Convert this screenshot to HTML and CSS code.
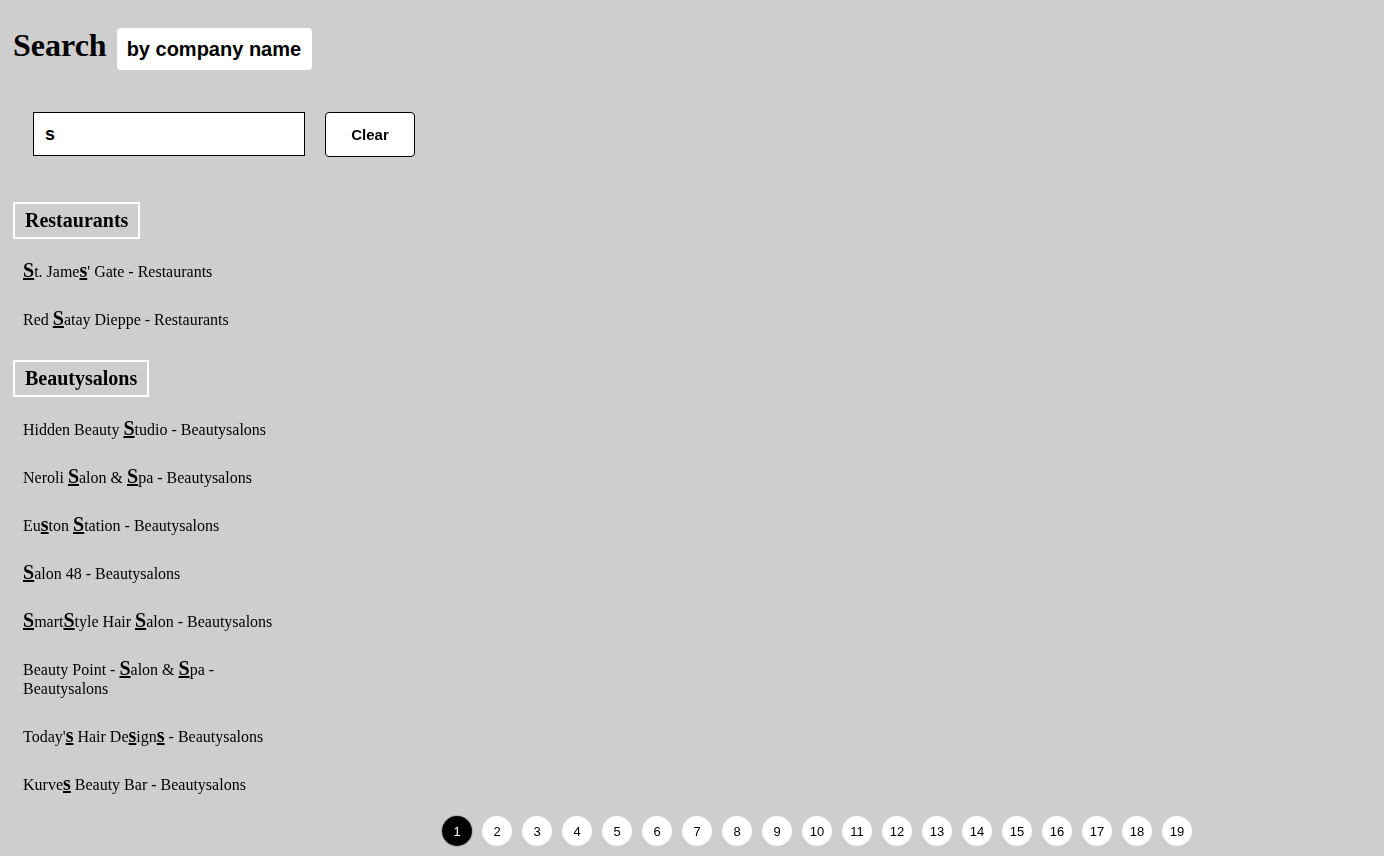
FILE: index.html
```html
<!DOCTYPE html>
<html lang="en">
<head>
<meta charset="utf-8">
<title>Search</title>
<link rel="stylesheet" href="styles.css">
</head>
<body>
<header class="top">
  <h1 class="title">Search</h1>
  <div class="mode">by company name</div>
</header>
<div class="search-row">
  <input class="search-input" type="text" value="s" autofocus>
  <button class="clear-btn" type="button">Clear</button>
</div>
<section class="results">
  <h3 class="group-title">Restaurants</h3>
  <ul class="items">
    <li class="item"><mark class="hl">S</mark>t. Jame<mark class="hl">s</mark>' Gate - Restaurants</li>
    <li class="item">Red <mark class="hl">S</mark>atay Dieppe - Restaurants</li>
  </ul>
  <h3 class="group-title">Beautysalons</h3>
  <ul class="items">
    <li class="item">Hidden Beauty <mark class="hl">S</mark>tudio - Beautysalons</li>
    <li class="item">Neroli <mark class="hl">S</mark>alon &amp; <mark class="hl">S</mark>pa - Beautysalons</li>
    <li class="item">Eu<mark class="hl">s</mark>ton <mark class="hl">S</mark>tation - Beautysalons</li>
    <li class="item"><mark class="hl">S</mark>alon 48 - Beautysalons</li>
    <li class="item"><mark class="hl">S</mark>mart<mark class="hl">S</mark>tyle Hair <mark class="hl">S</mark>alon - Beautysalons</li>
    <li class="item">Beauty Point - <mark class="hl">S</mark>alon &amp; <mark class="hl">S</mark>pa - Beautysalons</li>
    <li class="item">Today'<mark class="hl">s</mark> Hair De<mark class="hl">s</mark>ign<mark class="hl">s</mark> - Beautysalons</li>
    <li class="item">Kurve<mark class="hl">s</mark> Beauty Bar - Beautysalons</li>
  </ul>
</section>
<nav class="pager">
  <span class="page active">1</span>
  <span class="page">2</span>
  <span class="page">3</span>
  <span class="page">4</span>
  <span class="page">5</span>
  <span class="page">6</span>
  <span class="page">7</span>
  <span class="page">8</span>
  <span class="page">9</span>
  <span class="page">10</span>
  <span class="page">11</span>
  <span class="page">12</span>
  <span class="page">13</span>
  <span class="page">14</span>
  <span class="page">15</span>
  <span class="page">16</span>
  <span class="page">17</span>
  <span class="page">18</span>
  <span class="page">19</span>
</nav>
</body>
</html>
```

FILE: styles.css
```css
html, body {
  margin: 0;
  background: #cecece;
}
body {
  padding: 28px 13px 0;
  font-family: "Liberation Serif", "Times New Roman", serif;
  color: #000;
  min-height: 856px;
  box-sizing: border-box;
}
.top {
  display: flex;
  align-items: flex-start;
  gap: 10px;
  height: 42px;
}
.title {
  margin: 0;
  font-size: 32px;
  font-weight: bold;
  line-height: 34px;
}
.mode {
  height: 42px;
  box-sizing: border-box;
  padding: 0 10px;
  width: 195px;
  display: flex;
  align-items: center;
  background: #fff;
  border-radius: 4px;
  font-family: "Liberation Sans", Arial, sans-serif;
  font-weight: bold;
  font-size: 20px;
}
.search-row {
  display: flex;
  gap: 20px;
  margin-top: 42px;
  padding-left: 20px;
  align-items: flex-start;
}
.search-input {
  width: 272px;
  height: 44px;
  box-sizing: border-box;
  border: 1px solid #000;
  border-radius: 0;
  padding: 0 11px;
  margin: 0;
  background: #fff;
  font-family: "Liberation Sans", Arial, sans-serif;
  font-weight: bold;
  font-size: 18px;
  outline: none;
  color: #000;
}
.clear-btn {
  width: 90px;
  height: 45px;
  box-sizing: border-box;
  border: 1px solid #000;
  border-radius: 4px;
  background: #fff;
  margin: 0;
  font-family: "Liberation Sans", Arial, sans-serif;
  font-weight: bold;
  font-size: 15px;
  color: #000;
}
.results {
  margin-top: 45px;
  width: 270px;
}
.group-title {
  display: inline-block;
  margin: 0 0 8px;
  padding: 5px 10px;
  border: 2px solid #fff;
  font-size: 20px;
  line-height: 23px;
  font-weight: bold;
}
.items + .group-title {
  margin-top: 17px;
}
.items {
  list-style: none;
  margin: 0;
  padding: 0;
}
.item {
  padding: 14px 10px 14px;
  font-size: 16px;
  line-height: 19px;
}
.hl {
  background: none;
  color: inherit;
  font-weight: bold;
  font-size: 1.25em;
  text-decoration: underline;
  line-height: 19px;
}
.pager {
  display: flex;
  gap: 10px;
  margin-top: 8px;
  padding-left: 429px;
}
.page {
  width: 30px;
  height: 30px;
  border-radius: 50%;
  background: #fff;
  display: flex;
  align-items: center;
  justify-content: center;
  font-family: "Liberation Sans", Arial, sans-serif;
  font-size: 13px;
  color: #000;
}
.page.active {
  background: #000;
  color: #fff;
  box-shadow: 0 0 0 1px #b0b0b0;
}
```
